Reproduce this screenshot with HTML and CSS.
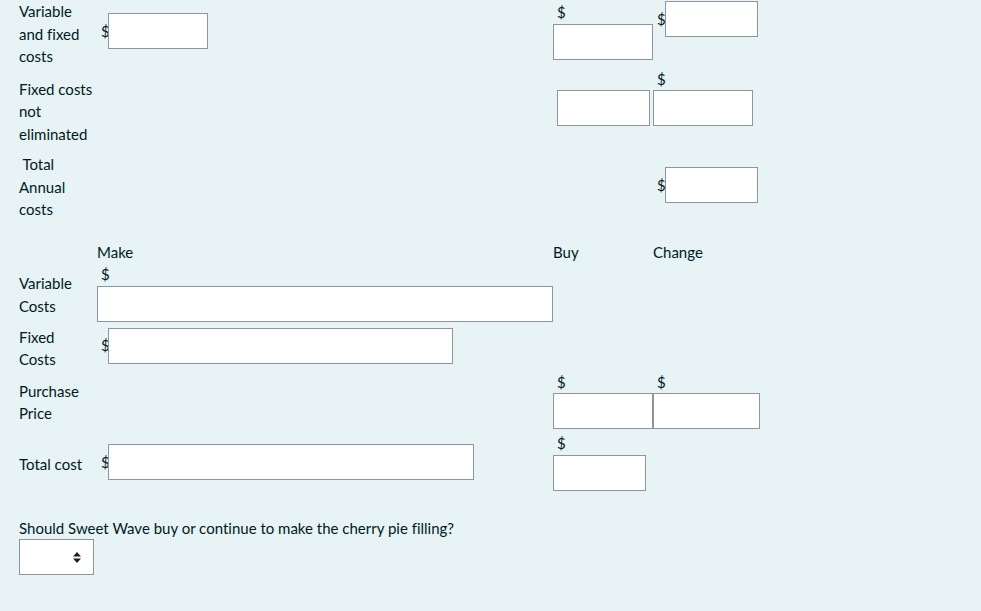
FILE: index.html
```html
<!DOCTYPE html>
<html>
<head>
<meta charset="utf-8">
<link rel="stylesheet" href="styles.css">
</head>
<body>
<div class="formulation">
  <div class="tbl t1">
    <div class="row">
      <div class="lbl">Variable and fixed costs</div>
      <div class="cell pt13"><div class="pair"><span class="cur">$</span><input class="inp w100" type="text"></div></div>
      <div class="cell pt1"><div class="cur-line">$</div><input class="inp w100" type="text"></div>
      <div class="cell pt1"><div class="pair"><span class="cur wide">$</span><input class="inp w93" type="text"></div></div>
    </div>
    <div class="row">
      <div class="lbl pt10">Fixed costs not eliminated</div>
      <div class="cell"></div>
      <div class="cell pt22"><input class="inp w93 ml4" type="text"></div>
      <div class="cell"><div class="cur-line">$</div><input class="inp w100" type="text"></div>
    </div>
    <div class="row">
      <div class="lbl pt8">&nbsp;Total Annual costs</div>
      <div class="cell"></div>
      <div class="cell"></div>
      <div class="cell pt22"><div class="pair"><span class="cur wide">$</span><input class="inp w93" type="text"></div></div>
    </div>
  </div>

  <div class="tbl t2">
    <div class="row">
      <div class="lbl"></div>
      <div class="cell">Make</div>
      <div class="cell">Buy</div>
      <div class="cell">Change</div>
    </div>
    <div class="row">
      <div class="lbl narrow pt9">Variable Costs</div>
      <div class="cell"><div class="cur-line">$</div><input class="inp w456" type="text"></div>
      <div class="cell"></div>
      <div class="cell"></div>
    </div>
    <div class="row">
      <div class="lbl narrow pt4">Fixed Costs</div>
      <div class="cell pt6"><div class="pair"><span class="cur">$</span><input class="inp w345" type="text"></div></div>
      <div class="cell"></div>
      <div class="cell"></div>
    </div>
    <div class="row">
      <div class="lbl narrow pt9">Purchase Price</div>
      <div class="cell"></div>
      <div class="cell"><div class="cur-line">$</div><input class="inp w100" type="text"></div>
      <div class="cell"><div class="cur-line">$</div><input class="inp w107" type="text"></div>
    </div>
    <div class="row">
      <div class="lbl narrow pt24">Total cost</div>
      <div class="cell pt15"><div class="pair"><span class="cur">$</span><input class="inp w366" type="text"></div></div>
      <div class="cell pt3"><div class="cur-line">$</div><input class="inp w93" type="text"></div>
      <div class="cell"></div>
    </div>
  </div>

  <p class="question">Should Sweet Wave buy or continue to make the cherry pie filling?</p>
  <div class="select-box">
    <svg width="8" height="11" viewBox="0 0 8 11"><path d="M4 0 L8 4.5 L0 4.5 Z M0 6.5 L8 6.5 L4 11 Z" fill="#1d2125"/></svg>
  </div>
</div>
</body>
</html>
```

FILE: styles.css
```css
html, body {
  margin: 0;
  padding: 0;
  background: #e7f3f5;
}
body {
  font-family: "Lato", "Noto Sans", sans-serif;
  font-size: 15px;
  line-height: 22.5px;
  color: #001a1e;
  font-variant-ligatures: none;
  font-feature-settings: "liga" 0, "clig" 0;
}
.formulation {
  background: #e7f3f5;
  padding: 0 0 40px 19px;
  min-height: 611px;
  box-sizing: border-box;
}
.row {
  display: grid;
  grid-template-columns: 78px 456px 100px 200px;
  align-items: start;
}
.lbl {
  max-width: 78px;
}
.lbl.narrow {
  max-width: 66px;
}
.t2 {
  margin-top: 20px;
}
.cell {
  min-height: 1px;
}
.pair {
  display: flex;
  align-items: center;
}
.cur {
  display: inline-block;
  width: 11px;
  box-sizing: border-box;
  padding-left: 4px;
  line-height: 22.5px;
}
.cur.wide {
  width: 12px;
}
.cur-line {
  padding-left: 4px;
  height: 22.5px;
}
.inp {
  display: block;
  box-sizing: border-box;
  height: 36px;
  margin: 0;
  padding: 0 8px;
  border: 1px solid #8f959e;
  border-radius: 0;
  background: #fff;
  font: inherit;
  outline: none;
}
.w93 { width: 93px; }
.w100 { width: 100px; }
.w107 { width: 107px; }
.w345 { width: 345px; }
.w366 { width: 366px; }
.w456 { width: 456px; }
.ml4 { margin-left: 4px; }
.pt1 { padding-top: 1px; }
.pt3 { padding-top: 3px; }
.pt4 { padding-top: 4px; }
.pt6 { padding-top: 6px; }
.pt8 { padding-top: 8px; }
.pt9 { padding-top: 9px; }
.pt10 { padding-top: 10px; }
.pt13 { padding-top: 13px; }
.pt15 { padding-top: 15px; }
.pt22 { padding-top: 22px; }
.pt24 { padding-top: 24px; }
.question {
  margin: 26px 0 0 0;
}
.select-box {
  width: 75px;
  height: 36px;
  box-sizing: border-box;
  border: 1px solid #8f959e;
  background: #fff;
  display: flex;
  align-items: center;
  justify-content: flex-end;
  padding-right: 12px;
}
```
